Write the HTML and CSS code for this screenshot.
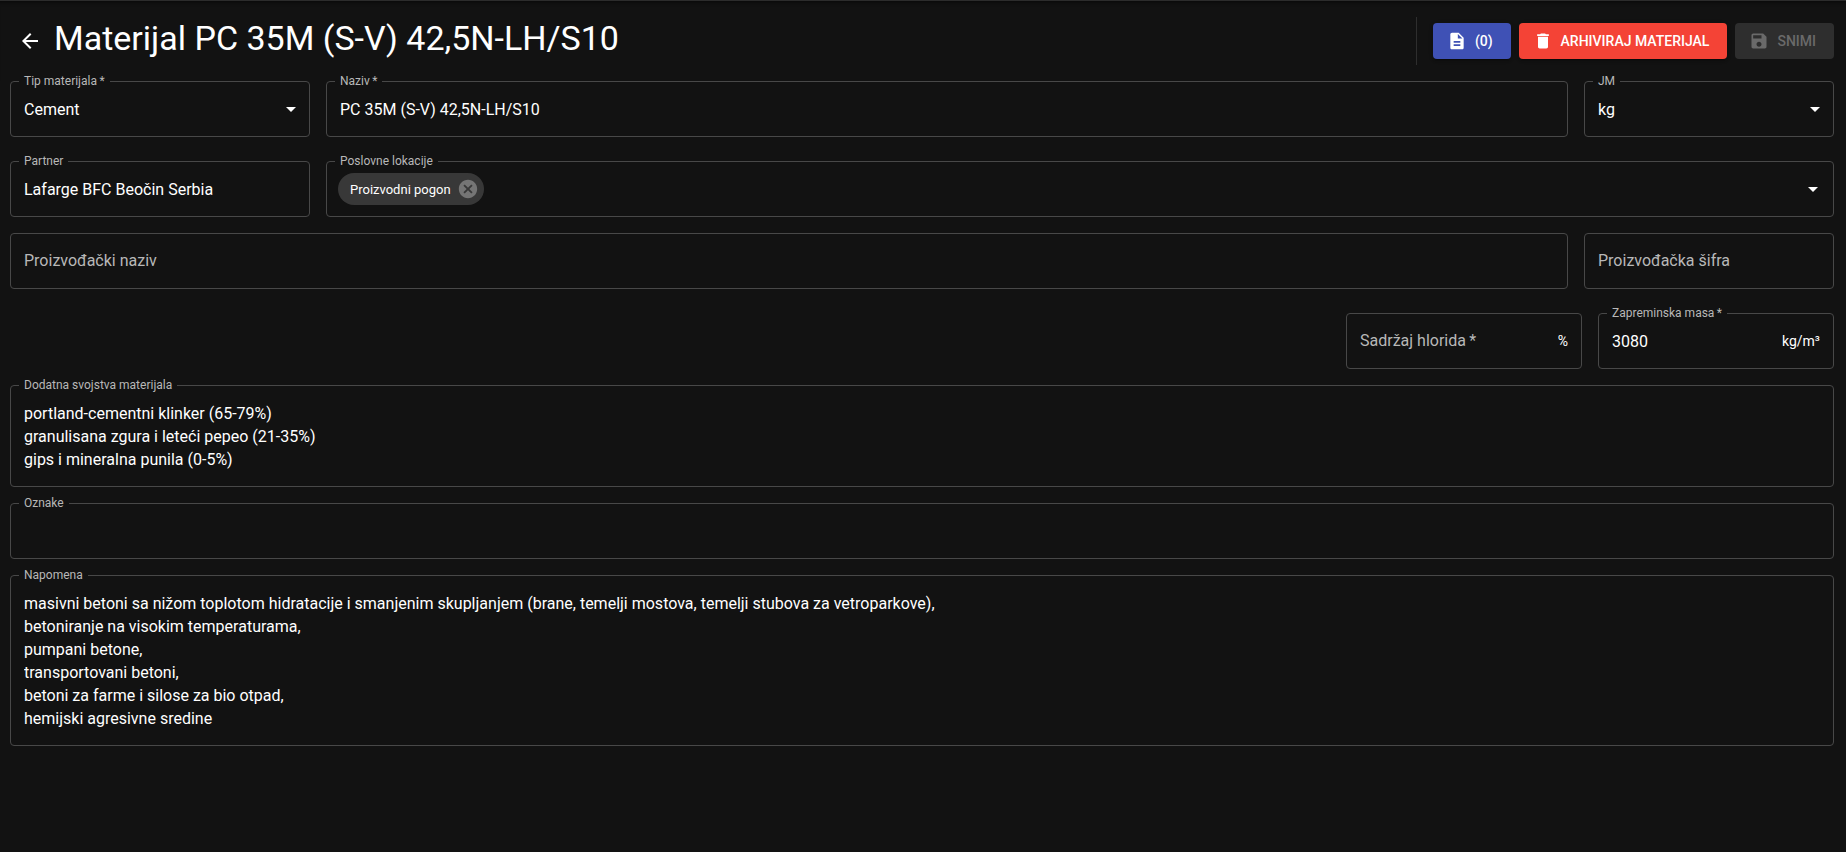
FILE: index.html
```html
<!DOCTYPE html>
<html lang="sr-Latn">
<head>
  <meta charset="UTF-8" />
  <meta name="viewport" content="width=device-width, initial-scale=1" />
  <title>Materijal PC 35M (S-V) 42,5N-LH/S10</title>
  <link rel="stylesheet" href="styles.css">
</head>
<body>
  <header class="toolbar">
    <button type="button" class="icon-btn" aria-label="Nazad">
      <svg viewBox="0 0 24 24"><path d="M20 11H7.83l5.59-5.59L12 4l-8 8 8 8 1.41-1.41L7.83 13H20v-2z"/></svg>
    </button>
    <h1>Materijal PC 35M (S-V) 42,5N-LH/S10</h1>
    <div class="actions">
      <button type="button" class="btn primary">
        <svg viewBox="0 0 24 24"><path d="M14 2H6c-1.1 0-1.99.9-1.99 2L4 20c0 1.1.89 2 1.99 2H18c1.1 0 2-.9 2-2V8l-6-6zm2 16H8v-2h8v2zm0-4H8v-2h8v2zm-3-5V3.5L18.5 9H13z"/></svg>
        <span>(0)</span>
      </button>
      <button type="button" class="btn danger">
        <svg viewBox="0 0 24 24"><path d="M6 19c0 1.1.9 2 2 2h8c1.1 0 2-.9 2-2V7H6v12zM19 4h-3.5l-1-1h-5l-1 1H5v2h14V4z"/></svg>
        <span>Arhiviraj materijal</span>
      </button>
      <button type="submit" form="materijal" class="btn" disabled>
        <svg viewBox="0 0 24 24"><path d="M17 3H5c-1.11 0-2 .9-2 2v14c0 1.1.89 2 2 2h14c1.1 0 2-.9 2-2V7l-4-4zm-5 16c-1.66 0-3-1.34-3-3s1.34-3 3-3 3 1.34 3 3-1.34 3-3 3zm3-10H5V5h10v4z"/></svg>
        <span>Snimi</span>
      </button>
    </div>
  </header>

  <form id="materijal" class="form">
    <div class="row">
      <div class="field w-lg">
        <label for="tip">Tip materijala&thinsp;*</label>
        <select id="tip">
          <option>Cement</option>
        </select>
        <svg class="arrow" viewBox="0 0 24 24"><path d="M7 10l5 5 5-5z"/></svg>
      </div>
      <div class="field grow">
        <label for="naziv">Naziv&thinsp;*</label>
        <input type="text" id="naziv" value="PC 35M (S-V) 42,5N-LH/S10">
      </div>
      <div class="field w-md">
        <label for="jm">JM</label>
        <select id="jm">
          <option>kg</option>
        </select>
        <svg class="arrow" viewBox="0 0 24 24"><path d="M7 10l5 5 5-5z"/></svg>
      </div>
    </div>

    <div class="row spaced">
      <div class="field w-lg">
        <label for="partner">Partner</label>
        <input type="text" id="partner" value="Lafarge BFC Beočin Serbia">
      </div>
      <div class="field grow tags">
        <label for="lokacije">Poslovne lokacije</label>
        <span class="chip">
          <span>Proizvodni pogon</span>
          <button type="button" aria-label="Ukloni">
            <svg viewBox="0 0 24 24"><path d="M12 2C6.47 2 2 6.47 2 12s4.47 10 10 10 10-4.47 10-10S17.53 2 12 2zm5 13.59L15.59 17 12 13.41 8.41 17 7 15.59 10.59 12 7 8.41 8.41 7 12 10.59 15.59 7 17 8.41 13.41 12 17 15.59z"/></svg>
          </button>
        </span>
        <input type="text" id="lokacije">
        <button type="button" class="open" aria-label="Otvori">
          <svg viewBox="0 0 24 24"><path d="M7 10l5 5 5-5z"/></svg>
        </button>
      </div>
    </div>

    <div class="row">
      <div class="field grow empty">
        <label for="pnaziv">Proizvođački naziv</label>
        <input type="text" id="pnaziv">
      </div>
      <div class="field w-md empty">
        <label for="psifra">Proizvođačka šifra</label>
        <input type="text" id="psifra">
      </div>
    </div>

    <div class="row end spaced">
      <div class="field w-sm empty">
        <label for="hloridi">Sadržaj hlorida&thinsp;*</label>
        <input type="text" id="hloridi">
        <span class="unit">%</span>
      </div>
      <div class="field w-sm">
        <label for="masa">Zapreminska masa&thinsp;*</label>
        <input type="text" id="masa" value="3080">
        <span class="unit">kg/m³</span>
      </div>
    </div>

    <div class="field multiline">
      <label for="svojstva">Dodatna svojstva materijala</label>
      <textarea id="svojstva" rows="3">portland-cementni klinker (65-79%)
granulisana zgura i leteći pepeo (21-35%)
gips i mineralna punila (0-5%)</textarea>
    </div>

    <div class="field">
      <label for="oznake">Oznake</label>
      <input type="text" id="oznake">
    </div>

    <div class="field multiline">
      <label for="napomena">Napomena</label>
      <textarea id="napomena" rows="6">masivni betoni sa nižom toplotom hidratacije i smanjenim skupljanjem (brane, temelji mostova, temelji stubova za vetroparkove),
betoniranje na visokim temperaturama,
pumpani betone,
transportovani betoni,
betoni za farme i silose za bio otpad,
hemijski agresivne sredine</textarea>
    </div>
  </form>
</body>
</html>
```
FILE: styles.css
```css
* {
  box-sizing: border-box;
}
body {
  margin: 0;
  background: #121212;
  color: #fff;
  font-family: Roboto, "Liberation Sans", sans-serif;
  font-size: 16px;
  border-top: 1px solid #2c2c2c;
}
button, input, select, textarea {
  font: inherit;
  color: inherit;
  background: none;
  border: none;
  margin: 0;
  padding: 0;
  outline: none;
}
button {
  cursor: pointer;
}
svg {
  display: block;
  flex-shrink: 0;
  fill: currentColor;
}
.toolbar {
  display: flex;
  align-items: center;
  padding: 16px 12px 16px 10px;
  box-shadow: inset 0 5px 4px -4px rgba(0,0,0,0.6);
}
.toolbar h1 {
  align-self: flex-start;
  flex: 1;
  margin: 0 0 0 4px;
  font-size: 34px;
  font-weight: 400;
  line-height: 42px;
}
.icon-btn {
  padding: 8px;
}
.icon-btn svg {
  width: 24px;
  height: 24px;
}
.actions {
  display: flex;
  align-items: center;
  gap: 8px;
  height: 48px;
  padding-left: 16px;
  border-left: 1px solid #2e2e2e;
}
.btn {
  display: flex;
  align-items: center;
  gap: 8px;
  height: 36px;
  padding: 0 18px 0 14px;
  border-radius: 4px;
  font-size: 14px;
  font-weight: 500;
  text-transform: uppercase;
  box-shadow: 0 3px 1px -2px rgba(0,0,0,0.2), 0 2px 2px rgba(0,0,0,0.14), 0 1px 5px rgba(0,0,0,0.12);
}
.btn svg {
  width: 20px;
  height: 20px;
}
.primary { background: #3f51b5; }
.danger { background: #f44336; }
.btn:disabled {
  background: #2e2e2e;
  color: #6a6a6a;
  box-shadow: none;
  cursor: default;
}
.form {
  display: flex;
  flex-direction: column;
  gap: 16px;
  padding: 0 12px 16px 10px;
}
.row {
  display: flex;
  gap: 16px;
}
.spaced { margin-top: 8px; }
.end { justify-content: flex-end; }
.field {
  position: relative;
  display: flex;
  align-items: center;
  min-height: 56px;
  padding: 0 13px;
  border: 1px solid #484848;
  border-radius: 4px;
}
.grow { flex: 1; }
.w-lg { width: 300px; }
.w-md { width: 250px; }
.w-sm { width: 236px; }
.field input, .field select, .field textarea {
  flex: 1;
  min-width: 0;
  width: 100%;
}
.field input {
  height: 24px;
}
.field select {
  height: 54px;
  appearance: none;
}
.field textarea {
  display: block;
  line-height: 23px;
  resize: none;
  overflow: hidden;
}
.multiline {
  padding: 16px 13px 15px;
}
/* label sits in the notch of the border */
.field label {
  position: absolute;
  top: -9px;
  left: 8px;
  padding: 0 5px;
  background: #121212;
  color: #b8b8b8;
  font-size: 12px;
  line-height: 16px;
}
.empty label {
  top: 15px;
  font-size: 16px;
  line-height: 24px;
}
.arrow {
  position: absolute;
  right: 6px;
  width: 24px;
  height: 24px;
  pointer-events: none;
}
.tags {
  padding: 0 8px 0 11px;
}
.open svg {
  width: 24px;
  height: 24px;
}
.chip {
  display: flex;
  align-items: center;
  gap: 6px;
  height: 32px;
  padding: 0 5px 0 12px;
  border-radius: 16px;
  background: #383838;
  font-size: 13px;
}
.chip svg {
  width: 22px;
  height: 22px;
  fill: #757575;
}
.unit {
  font-size: 14px;
}
```
